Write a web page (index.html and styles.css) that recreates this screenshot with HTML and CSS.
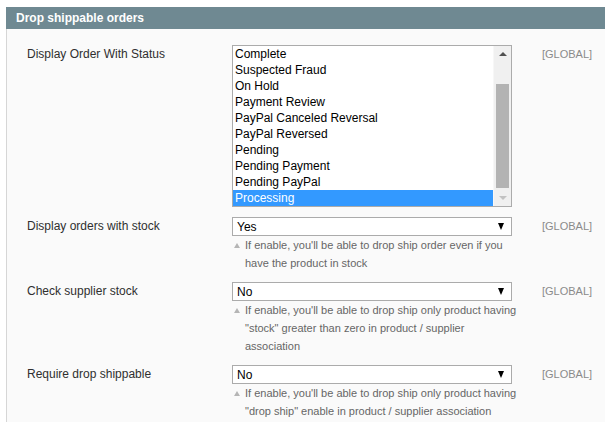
FILE: index.html
```html
<!DOCTYPE html>
<html lang="en">
<head>
  <meta charset="UTF-8">
  <title>Drop shippable orders</title>
  <link rel="stylesheet" href="styles.css">
</head>
<body>
  <!-- Config section -->
  <div class="section">
    <div class="section-head">Drop shippable orders</div>
    <div class="section-body">

      <div class="row">
        <div class="label">Display Order With Status</div>
        <div class="value">
          <div class="listbox" role="listbox">
            <div class="options">
              <div class="option">Complete</div>
              <div class="option">Suspected Fraud</div>
              <div class="option">On Hold</div>
              <div class="option">Payment Review</div>
              <div class="option">PayPal Canceled Reversal</div>
              <div class="option">PayPal Reversed</div>
              <div class="option">Pending</div>
              <div class="option">Pending Payment</div>
              <div class="option">Pending PayPal</div>
              <div class="option selected">Processing</div>
            </div>
            <div class="scrollbar">
              <span class="arrow-up"></span>
              <div class="track"><div class="thumb"></div></div>
              <span class="arrow-down"></span>
            </div>
          </div>
        </div>
        <div class="scope">[GLOBAL]</div>
      </div>

      <div class="row">
        <div class="label">Display orders with stock</div>
        <div class="value">
          <div class="select"><span>Yes</span><span class="caret"></span></div>
          <p class="note">If enable, you'll be able to drop ship order even if you have the product in stock</p>
        </div>
        <div class="scope">[GLOBAL]</div>
      </div>

      <div class="row">
        <div class="label">Check supplier stock</div>
        <div class="value">
          <div class="select"><span>No</span><span class="caret"></span></div>
          <p class="note">If enable, you'll be able to drop ship only product having "stock" greater than zero in product / supplier association</p>
        </div>
        <div class="scope">[GLOBAL]</div>
      </div>

      <div class="row">
        <div class="label">Require drop shippable</div>
        <div class="value">
          <div class="select"><span>No</span><span class="caret"></span></div>
          <p class="note">If enable, you'll be able to drop ship only product having "drop ship" enable in product / supplier association</p>
        </div>
        <div class="scope">[GLOBAL]</div>
      </div>

    </div>
  </div>
</body>
</html>
```

FILE: styles.css
```css
body {
  margin: 7px 0 0 6px;
  font-family: "Liberation Sans", Arial, sans-serif;
  background: #FFFFFF;
  overflow: hidden;
}

/* Section box */
.section {
  width: 640px;
}

.section-head {
  height: 22px;
  line-height: 22px;
  padding-left: 10px;
  background-color: #6F8992;
  color: #FFFFFF;
  font-size: 12px;
  font-weight: bold;
}

.section-body {
  background-color: #FAFAFA;
  border-left: 1px solid #D6D6D6;
  padding: 12px 0 20px 20px;
  min-height: 400px;
}

.row {
  display: grid;
  grid-template-columns: 205px 280px 30px auto;
  padding: 4px 0 6px;
}

.label {
  font-size: 12px;
  line-height: 19px;
  color: #2F2F2F;
}

.scope {
  grid-column: 4;
  font-size: 11px;
  line-height: 19px;
  color: #8A8A8A;
}

/* Multi select list */
.listbox {
  display: flex;
  height: 160px;
  border: 1px solid #ABABAB;
  background: #FFFFFF;
}

.options {
  flex: 1;
}

.option {
  height: 16px;
  line-height: 16px;
  padding-left: 2px;
  font-size: 12px;
  color: #000000;
}

.option.selected {
  background-color: #3399FF;
  color: #FFFFFF;
}

.scrollbar {
  width: 17px;
  display: flex;
  flex-direction: column;
  align-items: center;
  background: #F0F0F0;
  border-left: 1px solid #F7F7F7;
}

.arrow-up,
.arrow-down {
  display: block;
  width: 0;
  height: 0;
  margin: 6px 0;
  border-left: 4px solid transparent;
  border-right: 4px solid transparent;
}

.arrow-up {
  border-bottom: 4px solid #505050;
}

.arrow-down {
  border-top: 4px solid #C2C2C2;
}

.track {
  flex: 1;
  width: 100%;
  padding-top: 6px;
}

.thumb {
  width: 13px;
  height: 104px;
  margin: 16px auto 0;
  background: #B3B3B3;
}

/* Dropdowns */
.select {
  display: flex;
  justify-content: space-between;
  align-items: center;
  height: 17px;
  padding: 0 7px 0 4px;
  border: 1px solid #ABABAB;
  background: #FFFFFF;
  font-size: 12px;
  color: #000000;
}

.caret {
  width: 0;
  height: 0;
  border-left: 3.5px solid transparent;
  border-right: 3.5px solid transparent;
  border-top: 7px solid #000000;
}

.note {
  margin: 0 -7px 0 0;
  padding-left: 13px;
  font-size: 11px;
  line-height: 18px;
  color: #666666;
}

.note::before {
  content: "";
  display: inline-block;
  margin-left: -11px;
  margin-right: 5px;
  vertical-align: 1px;
  border-left: 3px solid transparent;
  border-right: 3px solid transparent;
  border-bottom: 5px solid #B5B5B5;
}
```
